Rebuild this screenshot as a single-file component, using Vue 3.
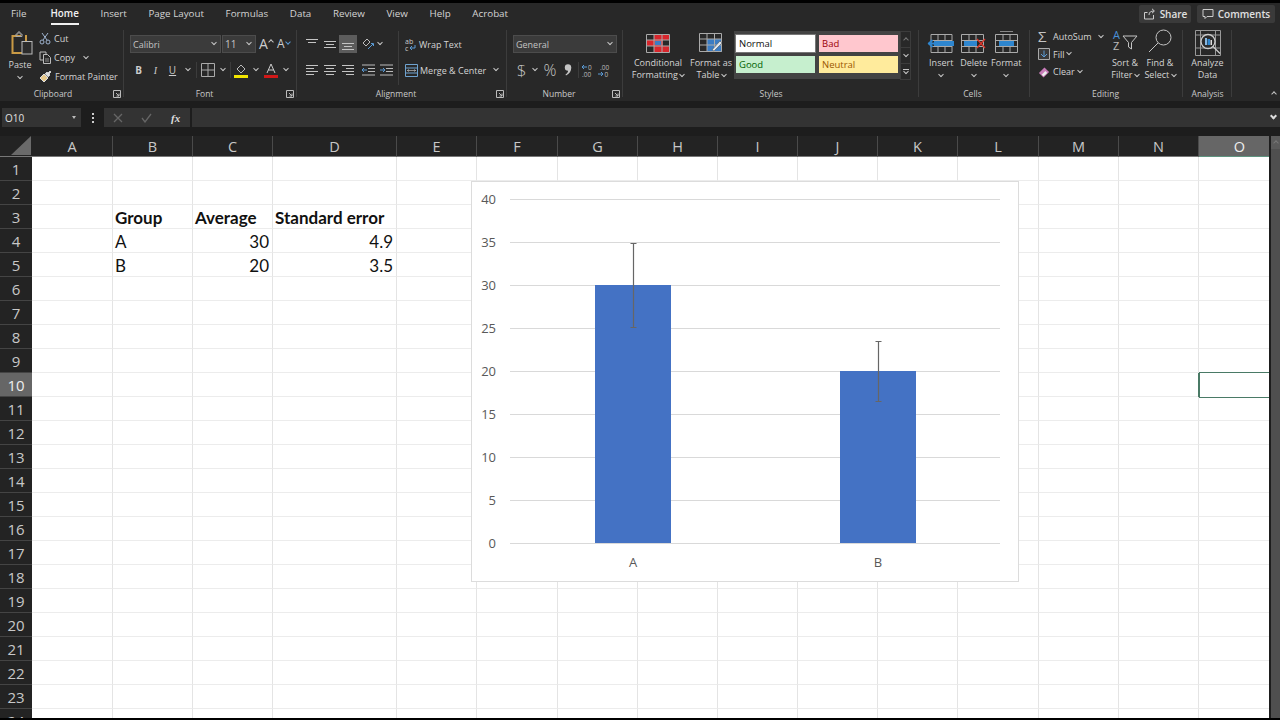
<template>
  <div class="app">
    <!-- tabs -->
    <div class="tabs">
      <span v-for="t in tabs" :key="t" class="tab" :class="{ active: t === 'Home' }">{{ t }}</span>
      <div class="tab-actions">
        <button class="act share">
          <svg width="13" height="12" viewBox="0 0 13 12" fill="none" stroke="#ccc"><path d="M1.5 4.500v6.500h9V7M1.5 4.500h3M6 7c0-3 2-4 5-4M9 .8l2.400 2.200L9 5.200" /></svg>
          Share
        </button>
        <button class="act comments">
          <svg width="12" height="12" viewBox="0 0 12 12" fill="none" stroke="#ccc"><path d="M1 1.500h10v7H5l-2 2v-2H1z" /></svg>
          Comments
        </button>
      </div>
    </div>

    <!-- ribbon -->
    <div class="ribbon">
      <section class="group g-clip">
        <div class="body clip-body">
          <div class="paste">
            <svg width="23" height="24" viewBox="0 0 23 24" fill="none">
              <path d="M10 5H1.500v17H11" stroke="#c99a45" stroke-width="2" />
              <path d="M14 5h1v5" stroke="#c99a45" stroke-width="2" />
              <path d="M5 5V3h2V1h2v2h2v2.500H5z" stroke="#aaa" />
              <rect x="11" y="10.500" width="10" height="12.500" fill="#2b2b2b" stroke="#bbb" />
            </svg>
            <span>Paste</span>
            <i class="chev" />
          </div>
          <div class="small-col">
            <div class="small-row">
              <svg width="12" height="13" viewBox="0 0 12 13" fill="none" stroke="#9fb4d0"><path d="M3 1l5 7M9 1L4 8" /><circle cx="3" cy="10" r="2" /><circle cx="9" cy="10" r="2" /></svg>
              <span>Cut</span>
            </div>
            <div class="small-row">
              <svg width="12" height="13" viewBox="0 0 12 13" fill="none" stroke="#bbb"><path d="M7 3V1H1v8h3" /><path d="M4.500 3.500h4l3 3v6h-7z" /><path d="M6 8h4M6 10h4" stroke-width=".7" /></svg>
              <span>Copy</span>
              <i class="chev spaced" />
            </div>
            <div class="small-row">
              <svg width="13" height="13" viewBox="0 0 13 13" fill="none"><path d="M1 8l4-4 4 4-4 4z" fill="#e6c88a" stroke="#ddd" /><path d="M6 4l2-2 1 1 2-2 1 1-2 2 1 1-2 2" fill="#ddd" stroke="#ccc" /></svg>
              <span>Format Painter</span>
            </div>
          </div>
        </div>
        <div class="label"><span /><span>Clipboard</span><svg class="launcher" width="8" height="8" viewBox="0 0 8 8" fill="none" stroke="#bbb"><path d="M.5 7.500v-7h7v7zM3 3l3 3M6 3.500V6H3.500" /></svg></div>
      </section>

      <section class="group g-font">
        <div class="body rows">
          <div class="row">
            <div class="combo font-name"><span>Calibri</span><i class="chev" /></div>
            <div class="combo font-size"><span>11</span><i class="chev" /></div>
            <span class="grow-font">A<i class="caret up" /></span>
            <span class="grow-font small">A<i class="caret down" /></span>
          </div>
          <div class="row">
            <span class="tb letter bold">B</span>
            <span class="tb letter italic">I</span>
            <span class="tb letter under">U</span>
            <span class="chev-cell wide"><i class="chev" /></span>
            <span class="vsep" />
            <span class="tb w20">
              <svg width="14" height="14" viewBox="0 0 14 14" fill="none" stroke="#aaa"><path d="M.5.500h13v13H.5zM7 .5v13M.5 7h13" /></svg>
            </span>
            <span class="chev-cell"><i class="chev" /></span>
            <span class="vsep narrow" />
            <span class="tb w20">
              <svg width="14" height="15" viewBox="0 0 14 15" fill="none"><path d="M3 6l4-4 4 4-4 4z" stroke="#bbb" /><path d="M0 12h14v3H0z" fill="#f2e500" /></svg>
            </span>
            <span class="chev-cell"><i class="chev" /></span>
            <span class="tb w20">
              <svg width="14" height="15" viewBox="0 0 14 15" fill="none"><path d="M3 10l4-9 4 9M4.500 7h5" stroke="#ccc" /><path d="M0 12h14v3H0z" fill="#d01818" /></svg>
            </span>
            <span class="chev-cell"><i class="chev" /></span>
          </div>
        </div>
        <div class="label"><span /><span>Font</span><svg class="launcher" width="8" height="8" viewBox="0 0 8 8" fill="none" stroke="#bbb"><path d="M.5 7.500v-7h7v7zM3 3l3 3M6 3.500V6H3.500" /></svg></div>
      </section>

      <section class="group g-align">
        <div class="body align-body">
          <div class="rows">
            <div class="row">
              <span v-for="a in alignTop" :key="a.id" class="tb w18" :class="{ pressed: a.on }">
                <svg width="12" height="12" viewBox="0 0 12 12" fill="none" stroke="#c4c4c4"><path :d="a.d" /></svg>
              </span>
              <span class="tb w18 gap-left">
                <svg width="13" height="13" viewBox="0 0 13 13" fill="none"><path d="M1 5l4-4 3 3-4 4z" stroke="#bbb" /><path d="M6 11l5-5M9 5.500h2.500V8" stroke="#5b9bd5" /></svg>
              </span>
              <span class="chev-cell tight"><i class="chev" /></span>
            </div>
            <div class="row">
              <span v-for="a in alignBottom" :key="a.id" class="tb w18">
                <svg width="12" height="12" viewBox="0 0 12 12" fill="none" stroke="#c4c4c4"><path :d="a.d" /></svg>
              </span>
              <span class="tb w18 gap-left">
                <svg width="13" height="12" viewBox="0 0 13 12" fill="none"><path d="M0 1h13M6 4.500h7M6 7.500h7M0 11h13" stroke="#bbb" /><path d="M5 6H0M2 4L0 6l2 2" stroke="#5b9bd5" /></svg>
              </span>
              <span class="tb w18">
                <svg width="13" height="12" viewBox="0 0 13 12" fill="none"><path d="M0 1h13M6 4.500h7M6 7.500h7M0 11h13" stroke="#bbb" /><path d="M0 6h5M3 4l2 2-2 2" stroke="#5b9bd5" /></svg>
              </span>
            </div>
          </div>
          <span class="vsep tall" />
          <div class="rows">
            <div class="row text-btn">
              <svg width="12" height="13" viewBox="0 0 12 13" fill="none">
                <text x="0" y="6" font-size="7" fill="#ccc" font-family="Open Sans, sans-serif">ab</text>
                <text x="0" y="12.500" font-size="7" fill="#ccc" font-family="Open Sans, sans-serif">c</text>
                <path d="M10 7v3H5M7 8L5 10l2 2" stroke="#5b9bd5" />
              </svg>
              <span>Wrap Text</span>
            </div>
            <div class="row text-btn">
              <svg width="13" height="13" viewBox="0 0 13 13" fill="none" stroke="#6fa3d0"><path d="M.5.500h12v12H.5zM.5 4h12M.5 9h12M.5 4v5" /><path d="M2 6.500h9M4 5.500l-1.500 1 1.500 1M9 5.500l1.500 1-1.500 1" stroke="#aaa" stroke-width=".8" /></svg>
              <span>Merge &amp; Center</span>
              <i class="chev spaced" />
            </div>
          </div>
        </div>
        <div class="label"><span /><span>Alignment</span><svg class="launcher" width="8" height="8" viewBox="0 0 8 8" fill="none" stroke="#bbb"><path d="M.5 7.500v-7h7v7zM3 3l3 3M6 3.500V6H3.500" /></svg></div>
      </section>

      <section class="group g-number">
        <div class="body rows">
          <div class="row">
            <div class="combo number-format"><span>General</span><i class="chev" /></div>
          </div>
          <div class="row">
            <span class="tb glyph dollar">$</span>
            <span class="chev-cell"><i class="chev" /></span>
            <span class="tb glyph percent">%</span>
            <span class="tb comma">
              <svg width="8" height="12" viewBox="0 0 8 12"><circle cx="4" cy="3.500" r="3.200" fill="#c4c4c4" /><path d="M7.200 3.500C7.400 7 5.500 10 2 11.500L1.500 10.500C3.500 9 4.500 7.500 4 6z" fill="#c4c4c4" /></svg>
            </span>
            <span class="vsep narrow" />
            <span class="tb decimals">
              <svg width="13" height="13" viewBox="0 0 13 13" fill="none"><path d="M6 3H1M3 1L1 3l2 2" stroke="#5b9bd5" /><text x="7" y="6" font-size="6.500" fill="#bbb" font-family="Open Sans, sans-serif">0</text><text x="1" y="12.500" font-size="6.500" fill="#bbb" font-family="Open Sans, sans-serif">.00</text></svg>
            </span>
            <span class="tb decimals">
              <svg width="13" height="13" viewBox="0 0 13 13" fill="none"><path d="M1 10h5M4 8l2 2-2 2" stroke="#5b9bd5" /><text x="3" y="6" font-size="6.500" fill="#bbb" font-family="Open Sans, sans-serif">.00</text><text x="7.500" y="12.500" font-size="6.500" fill="#bbb" font-family="Open Sans, sans-serif">0</text></svg>
            </span>
          </div>
        </div>
        <div class="label"><span /><span>Number</span><svg class="launcher" width="8" height="8" viewBox="0 0 8 8" fill="none" stroke="#bbb"><path d="M.5 7.500v-7h7v7zM3 3l3 3M6 3.500V6H3.500" /></svg></div>
      </section>

      <section class="group g-styles">
        <div class="body styles-body">
          <div class="large cf">
            <div class="large-icon">
              <svg width="24" height="19" viewBox="0 0 24 19" fill="none">
                <path d="M8 1h15v5H8zM1 6h16v6H1zM8 12h15v6H8z" fill="#d8262c" />
                <path d="M9 7h6v4H9z" fill="#3a7cc4" />
                <path d="M.5.500h23v18H.5zM.5 6h23M.5 12h23M8 .5v18M16 .5v18" stroke="#aaa" />
              </svg>
            </div>
            <span>Conditional</span>
            <span>Formatting <i class="chev" /></span>
          </div>
          <div class="large ft">
            <div class="large-icon">
              <svg width="24" height="20" viewBox="0 0 24 20" fill="none">
                <path d="M8 6h15v13H8z" fill="#3a7cc4" />
                <path d="M.5.500h22v18H.5zM.5 6h22M.5 12h22M8 .5v18M15.500.5v18" stroke="#aaa" />
                <path d="M13 17l8-9 2 2-8 8z" fill="#dfe6ee" stroke="#444" stroke-width=".5" />
              </svg>
            </div>
            <span>Format as</span>
            <span>Table <i class="chev" /></span>
          </div>
          <div class="gallery">
            <div class="swatches">
              <span v-for="s in swatches" :key="s.name" class="swatch" :class="s.cls">{{ s.name }}</span>
            </div>
            <div class="scrollers">
              <span><i class="caret up dim" /></span>
              <span><i class="chev" /></span>
              <span class="more"><i class="chev" /></span>
            </div>
          </div>
        </div>
        <div class="label plain">Styles</div>
      </section>

      <section class="group g-cells">
        <div class="body cells-body">
          <div class="large cell-btn">
            <div class="large-icon">
              <svg width="26" height="19" viewBox="0 0 26 19" fill="none">
                <path d="M3 .5h21v18H3zM3 6.500h21M3 12.500h21M10 .5v18M17 .5v18" stroke="#aaa" />
                <path d="M6 7h20v5H6z" fill="#2e86cf" />
                <path d="M0 9.500h8M4.500 6L1 9.500 4.500 13" stroke="#2e86cf" stroke-width="2" />
              </svg>
            </div>
            <span>Insert</span>
            <i class="chev" />
          </div>
          <div class="large cell-btn">
            <div class="large-icon">
              <svg width="25" height="19" viewBox="0 0 25 19" fill="none">
                <path d="M.5.500h22v18H.5zM.5 6.500h22M.5 12.500h22M8 .5v18M15 .5v18" stroke="#aaa" />
                <path d="M3 7h13v5H3z" fill="#2e86cf" />
                <path d="M16 5l8 9M24 5l-8 9" stroke="#d8352a" stroke-width="1.400" />
              </svg>
            </div>
            <span>Delete</span>
            <i class="chev" />
          </div>
          <div class="large cell-btn">
            <div class="large-icon">
              <svg width="23" height="22" viewBox="0 0 23 22" fill="none">
                <path d="M5 .5h13" stroke="#888" />
                <path d="M.5 3.500h22v18H.5zM.5 9.500h22M.5 15.500h22M8 3.500v18M15 3.500v18" stroke="#aaa" />
                <path d="M4 10h15v5H4z" fill="#2e86cf" />
              </svg>
            </div>
            <span>Format</span>
            <i class="chev" />
          </div>
        </div>
        <div class="label plain">Cells</div>
      </section>

      <section class="group g-edit">
        <div class="body edit-body">
          <div class="small-col edit-col">
            <div class="small-row">
              <span class="sigma">Σ</span>
              <span>AutoSum</span>
              <i class="chev far" />
            </div>
            <div class="small-row">
              <svg width="12" height="12" viewBox="0 0 12 12" fill="none"><path d="M.5.500h11v11H.5z" stroke="#aaa" fill="#3a3a3a" /><path d="M6 2.500v6.500M3 6l3 3 3-3" stroke="#5b9bd5" /></svg>
              <span>Fill</span>
              <i class="chev" />
            </div>
            <div class="small-row">
              <svg width="12" height="12" viewBox="0 0 13 13"><path d="M1 7.500L7 1.500l5 5-6 6z" fill="#c77bb8" /><path d="M4 9.500l4-4 2 2-4 3.500z" fill="#eee" /></svg>
              <span>Clear</span>
              <i class="chev" />
            </div>
          </div>
          <div class="large sort">
            <div class="large-icon">
              <svg width="26" height="24" viewBox="0 0 26 24" fill="none">
                <text x="1" y="10" font-size="11" fill="#4a90d9" font-family="Open Sans, sans-serif">A</text>
                <text x="1" y="21" font-size="11" fill="#bbb" font-family="Open Sans, sans-serif">Z</text>
                <path d="M11 7h14l-5.500 6.500V20L16.500 18v-4.500z" stroke="#c4c4c4" />
              </svg>
            </div>
            <span>Sort &amp;</span>
            <span>Filter <i class="chev" /></span>
          </div>
          <div class="large find">
            <div class="large-icon">
              <svg width="24" height="24" viewBox="0 0 24 24" fill="none" stroke="#c4c4c4"><circle cx="15.500" cy="8.500" r="7.500" /><path d="M10 14L1 23" /></svg>
            </div>
            <span>Find &amp;</span>
            <span>Select <i class="chev" /></span>
          </div>
        </div>
        <div class="label plain">Editing</div>
      </section>

      <section class="group g-analysis">
        <div class="body">
          <div class="large analyze">
            <div class="large-icon">
              <svg width="26" height="26" viewBox="0 0 26 26" fill="none">
                <path d="M.5.500h25v25H.5zM.5 5h25M.5 18h25M5.500.5v25M20.500.5v25" stroke="#999" />
                <circle cx="13" cy="11.500" r="7" fill="#2b2b2b" stroke="#ccc" stroke-width="1.300" />
                <path d="M10 8h2v7h-2z" fill="#8ab8e0" /><path d="M12.500 9h2.500v6h-2.500z" fill="#2e86cf" /><path d="M15.500 10H17v5h-1.500z" fill="#ddd" />
                <path d="M18 16.500l7 7" stroke="#ccc" stroke-width="1.300" />
              </svg>
            </div>
            <span>Analyze</span>
            <span>Data</span>
          </div>
        </div>
        <div class="label plain">Analysis</div>
      </section>

      <div class="collapse"><i class="caret up" /></div>
    </div>

    <!-- formula bar -->
    <div class="formula">
      <div class="name-box"><span>O10</span><i class="tri" /></div>
      <div class="dots"><i /><i /><i /></div>
      <div class="fn-box">
        <svg width="10" height="10" viewBox="0 0 10 10" fill="none" stroke="#666" stroke-width="1.300"><path d="M1 1l8 8M9 1L1 9" /></svg>
        <svg width="11" height="10" viewBox="0 0 11 10" fill="none" stroke="#666" stroke-width="1.300"><path d="M1 5l3 4 6-8" /></svg>
        <span class="fx">fx</span>
      </div>
      <div class="fn-input"><i class="chev bold-chev" /></div>
    </div>

    <!-- sheet -->
    <div class="sheet">
      <div class="grid" :style="{ gridTemplateColumns: gridCols }">
        <div class="corner"><svg width="20" height="19" viewBox="0 0 20 19"><path d="M0 19L20 0v19z" fill="#6a6a6a" /></svg></div>
        <div v-for="c in columns" :key="c.name" class="col-head" :class="{ selected: c.name === 'O' }">{{ c.name }}</div>
        <template v-for="r in rows" :key="r">
          <div class="row-head" :class="{ selected: r === 10 }">{{ r }}</div>
          <div
            v-for="c in columns"
            :key="c.name + r"
            class="cell"
            :class="cellClass(c.name, r)"
          >{{ cellText(c.name, r) }}</div>
        </template>

        <div class="chart">
          <svg width="546" height="399" viewBox="0 0 546 399">
            <g v-for="t in ticks" :key="t.v">
              <line x1="38" x2="528" :y1="t.y" :y2="t.y" stroke="#d9d9d9" />
              <text x="24" :y="t.y + 4.500" text-anchor="end" class="axis">{{ t.v }}</text>
            </g>
            <g v-for="b in bars" :key="b.name">
              <rect :x="b.x - 38" :y="b.top" width="76" :height="b.h" fill="#4472c4" />
              <path :d="b.err" stroke="#666" stroke-width="1.200" fill="none" />
              <text :x="b.x" y="384.500" text-anchor="middle" class="axis">{{ b.name }}</text>
            </g>
          </svg>
        </div>
      </div>
      <div class="scrollbar"><span class="sb-up"><i class="caret up dim" /></span></div>
    </div>
  </div>
</template>

<script setup>
const tabs = ['File', 'Home', 'Insert', 'Page Layout', 'Formulas', 'Data', 'Review', 'View', 'Help', 'Acrobat']

const alignTop = [
  { id: 'top', d: 'M0 1.500h12M2 4.500h8' },
  { id: 'mid', d: 'M0 3.500h12M2 6.500h8M0 9.500h12' },
  { id: 'bot', d: 'M0 5.500h12M2 8.500h8M0 11.500h12', on: true },
]
const alignBottom = [
  { id: 'left', d: 'M0 1.500h12M0 4.500h8M0 7.500h12M0 10.500h8' },
  { id: 'center', d: 'M0 1.500h12M2 4.500h8M0 7.500h12M2 10.500h8' },
  { id: 'right', d: 'M0 1.500h12M4 4.500h8M0 7.500h12M4 10.500h8' },
]

const swatches = [
  { name: 'Normal', cls: 'normal' },
  { name: 'Bad', cls: 'bad' },
  { name: 'Good', cls: 'good' },
  { name: 'Neutral', cls: 'neutral' },
]

const columns = [
  ['A', 81], ['B', 80], ['C', 80], ['D', 124], ['E', 80], ['F', 81], ['G', 80], ['H', 80],
  ['I', 80], ['J', 80], ['K', 80], ['L', 81], ['M', 80], ['N', 80], ['O', 81],
].map(([name, w]) => ({ name, w }))
const gridCols = '32px ' + columns.map(c => c.w + 'px').join(' ')
const rows = Array.from({ length: 24 }, (_, i) => i + 1)

const cells = {
  B3: { text: 'Group', bold: true },
  C3: { text: 'Average', bold: true },
  D3: { text: 'Standard error', bold: true },
  B4: { text: 'A' },
  C4: { text: '30', num: true },
  D4: { text: '4.9', num: true },
  B5: { text: 'B' },
  C5: { text: '20', num: true },
  D5: { text: '3.5', num: true },
}

function cellText(col, row) {
  return cells[col + row]?.text ?? ''
}

function cellClass(col, row) {
  const c = cells[col + row]
  return {
    bold: c?.bold,
    num: c?.num,
    active: col + row === 'O10',
  }
}

// chart: 0 sits at y=361, 8.6px per unit
const y0 = 361
const yOf = v => y0 - v * 8.6
const ticks = [0, 5, 10, 15, 20, 25, 30, 35, 40].map(v => ({ v, y: Math.round(yOf(v)) + 0.5 }))
const bars = [
  { name: 'A', x: 161, value: 30, se: 4.9 },
  { name: 'B', x: 406, value: 20, se: 3.5 },
].map(b => {
  const top = Math.round(yOf(b.value))
  const hi = Math.round(yOf(b.value + b.se)) + 0.5
  const lo = Math.round(yOf(b.value - b.se)) + 0.5
  const x = b.x + 0.5
  return {
    ...b,
    top,
    h: y0 - top,
    err: `M${x} ${hi}V${lo}M${x - 3} ${hi}h6M${x - 3} ${lo}h6`,
  }
})
</script>

<style>
html, body { margin: 0; background: #000; }
</style>

<style scoped>
.app {
  width: 1280px;
  height: 720px;
  overflow: hidden;
  background: #000;
  display: flex;
  flex-direction: column;
  padding-top: 3px;
  box-sizing: border-box;
  font-family: "Open Sans", "Liberation Sans", sans-serif;
  color: #d4d4d4;
  font-size: 9px;
}

/* tabs */
.tabs {
  height: 25px;
  background: #282828;
  display: flex;
  align-items: center;
  gap: 21.600px;
  padding: 0 5px 3px 11px;
  box-sizing: border-box;
  flex: none;
}
.tab {
  font-size: 9.800px;
  line-height: 14px;
  position: relative;
}
.tab:first-child {
  margin-right: 2.400px;
}
.tab.active {
  font-weight: 600;
  color: #f2f2f2;
}
.tab.active::after {
  content: "";
  position: absolute;
  left: 0;
  right: 0;
  bottom: -4px;
  height: 2px;
  background: #f0f0f0;
}
.tab-actions {
  margin-left: auto;
  display: flex;
  gap: 6px;
}
.act {
  height: 18px;
  background: #3a3a3a;
  border: 0;
  border-radius: 2px;
  color: #e0e0e0;
  font: 600 10px "Open Sans", sans-serif;
  display: flex;
  align-items: center;
  justify-content: center;
  gap: 4px;
  padding: 0;
}
.share { width: 52px; }
.comments { width: 78px; }

/* ribbon */
.ribbon {
  height: 73px;
  flex: none;
  background: #282828;
  display: flex;
}
.group {
  flex: none;
  box-sizing: border-box;
  display: flex;
  flex-direction: column;
  position: relative;
}
.group::after {
  content: "";
  position: absolute;
  right: 0;
  top: 2px;
  bottom: 4px;
  width: 1px;
  background: #3c3c3c;
}
.g-clip { width: 124px; }
.g-font { width: 173px; padding-left: 6px; }
.g-align { width: 210px; padding-left: 6px; }
.g-number { width: 116px; padding-left: 6px; }
.g-styles { width: 296px; padding-left: 10px; }
.g-cells { width: 111px; padding-left: 6px; }
.g-edit { width: 153px; padding-left: 8px; }
.g-analysis { width: 49px; }

.body {
  height: 59px;
  flex: none;
  box-sizing: border-box;
}
.label {
  height: 14px;
  font-size: 8.500px;
  line-height: 14px;
  color: #c8c8c8;
  display: grid;
  grid-template-columns: 1fr auto 1fr;
  align-items: center;
  text-align: center;
  padding-right: 18px;
}
.label.plain {
  display: block;
  padding-right: 10px;
}
.g-analysis .label.plain {
  padding-right: 0;
}
.launcher {
  justify-self: end;
  margin-right: -15px;
}

.rows {
  display: flex;
  flex-direction: column;
  gap: 8px;
  padding-top: 7px;
}
.row {
  height: 18px;
  display: flex;
  align-items: center;
}

/* small pieces */
.chev {
  display: inline-block;
  width: 3px;
  height: 3px;
  border-right: 1px solid #c4c4c4;
  border-bottom: 1px solid #c4c4c4;
  transform: translateY(-1.500px) rotate(45deg);
  flex: none;
}
.chev.spaced { margin-left: 6px; }
.chev.far { margin-left: 4px; }
.bold-chev {
  border-width: 2px;
  border-color: #ddd;
}
.caret {
  display: inline-block;
  width: 3px;
  height: 3px;
  border-left: 1px solid #c4c4c4;
  border-top: 1px solid #c4c4c4;
  transform: rotate(45deg);
}
.caret.down {
  transform: rotate(225deg);
  border-color: #5b9bd5;
}
.caret.up.dim { border-color: #777; }
.chev-cell {
  width: 10px;
  height: 18px;
  display: flex;
  align-items: center;
  justify-content: center;
}
.chev-cell.wide { width: 14px; }
.chev-cell.tight { width: 8px; margin-left: -1px; }
.tb {
  width: 17px;
  height: 18px;
  display: flex;
  align-items: center;
  justify-content: center;
  flex: none;
}
.tb.w18 { width: 18px; }
.tb.w20 { width: 20px; }
.tb.gap-left { margin-left: 2px; }
.tb.pressed { background: #5c5c5c; }
.vsep {
  width: 1px;
  height: 16px;
  background: #3c3c3c;
  margin: 0 1px;
  flex: none;
}
.vsep.narrow { margin: 0 0 0 2px; }
.vsep.tall {
  height: 54px;
  margin: 3px 6px 0 3px;
}

/* clipboard */
.clip-body {
  display: flex;
  padding-left: 4px;
}
.paste {
  width: 32px;
  display: flex;
  flex-direction: column;
  align-items: center;
  padding-top: 3px;
}
.paste svg { margin: 0 0 3px 4px; }
.paste span { line-height: 13px; }
.paste .chev { margin-top: 5px; }
.small-col {
  display: flex;
  flex-direction: column;
  padding-top: 1px;
  margin-left: 3px;
}
.small-row {
  height: 19px;
  display: flex;
  align-items: center;
  gap: 3px;
  white-space: nowrap;
}

/* font */
.combo {
  height: 18px;
  box-sizing: border-box;
  background: #3b3b3b;
  border: 1px solid #4c4c4c;
  display: flex;
  align-items: center;
  justify-content: space-between;
  padding: 0 4px 0 2px;
  font-size: 9px;
  color: #c4c4c4;
}
.font-name { width: 91px; }
.font-size { width: 34px; margin-left: 1px; font-size: 10px; }
.number-format { width: 104px; }
.grow-font {
  font-size: 14px;
  margin-left: 3px;
  width: 17px;
  display: flex;
  align-items: flex-start;
  gap: 1px;
  line-height: 18px;
  color: #ccc;
}
.grow-font.small { font-size: 12px; margin-left: 1px; }
.grow-font .caret { margin-top: 5px; }
.letter {
  font-size: 10px;
  color: #ccc;
  font-family: "Liberation Serif", serif;
}
.letter.bold { font-family: "Open Sans", sans-serif; font-weight: 700; }
.letter.italic { font-style: italic; }
.letter.under { font-family: "Open Sans", sans-serif; text-decoration: underline; }

/* alignment */
.align-body { display: flex; }
.text-btn {
  gap: 2px;
  white-space: nowrap;
}

/* number */
.glyph { color: #c4c4c4; font-weight: 300; }
.dollar { font-size: 17px; }
.percent { font-size: 16px; width: 20px; }
.comma { width: 16px; margin-left: 0; }
.decimals { width: 16px; }

/* styles */
.large {
  display: flex;
  flex-direction: column;
  align-items: center;
  flex: none;
  line-height: 12px;
  white-space: nowrap;
}
.large-icon {
  height: 29px;
  display: flex;
  align-items: flex-end;
  padding-bottom: 4px;
  box-sizing: border-box;
}
.large-icon svg { overflow: visible; }
.large > .chev { margin-top: 5px; }
.styles-body { display: flex; }
.cf { width: 50px; }
.ft { width: 42px; margin-left: 7px; }
.gallery {
  margin: 3px 0 0 2px;
  display: flex;
  height: 48px;
}
.swatches {
  width: 166px;
  background: #434343;
  box-sizing: border-box;
  padding: 4px 2px;
  display: grid;
  grid-template-columns: 79px 79px;
  grid-auto-rows: 17px;
  column-gap: 4px;
  row-gap: 4px;
}
.swatch {
  font-size: 9.500px;
  line-height: 17px;
  padding-left: 3px;
}
.normal { background: #fff; color: #111; outline: 1px solid #777; }
.bad { background: #ffc7ce; color: #9c0006; }
.good { background: #c6efce; color: #006100; }
.neutral { background: #ffeb9c; color: #9c5700; }
.scrollers {
  width: 11px;
  display: flex;
  flex-direction: column;
}
.scrollers span {
  flex: 1;
  border: 1px solid #3c3c3c;
  margin-bottom: -1px;
  display: flex;
  align-items: center;
  justify-content: center;
}
.scrollers .more {
  flex-direction: column;
  gap: 1px;
}
.more::before {
  content: "";
  width: 6px;
  height: 1px;
  background: #c4c4c4;
}

/* cells, editing */
.cells-body { display: flex; }
.cell-btn { width: 32.500px; }
.edit-body { display: flex; }
.edit-col {
  width: 69.500px;
  margin-left: 0;
  flex: none;
  padding-top: 0;
}
.edit-col .small-row { height: 17.500px; }
.sigma {
  font-size: 15px;
  line-height: 15px;
  width: 12px;
  color: #c4c4c4;
}
.sort { width: 35px; }
.find { width: 35px; }
.analyze { width: 49px; }
.g-analysis .large-icon { height: 29px; padding-bottom: 1px; }

.collapse {
  flex: 1;
  display: flex;
  justify-content: flex-end;
  align-items: flex-end;
  padding: 0 4px 5px 0;
}

/* formula bar */
.formula {
  margin-top: 7px;
  height: 19px;
  flex: none;
  display: flex;
  background: #1d1d1d;
  box-shadow: 0 -7px 0 #1d1d1d, 0 9px 0 #1d1d1d;
}
.name-box {
  margin-left: 2px;
  width: 79px;
  background: #333;
  display: flex;
  align-items: center;
  justify-content: space-between;
  padding: 0 5px 0 3px;
  box-sizing: border-box;
  font-size: 10px;
  color: #e0e0e0;
}
.tri {
  width: 0;
  height: 0;
  border: 2.500px solid transparent;
  border-top: 3px solid #bbb;
  border-bottom: 0;
}
.dots {
  width: 23px;
  display: flex;
  flex-direction: column;
  align-items: center;
  justify-content: center;
  gap: 2px;
}
.dots i {
  width: 2px;
  height: 2px;
  background: #ccc;
}
.fn-box {
  width: 86px;
  background: #333;
  display: flex;
  align-items: center;
  gap: 18px;
  padding-left: 9px;
  box-sizing: border-box;
}
.fx {
  font: italic 700 11px "Liberation Serif", serif;
  color: #ddd;
  margin-left: 1px;
}
.fn-input {
  flex: 1;
  margin-left: 2px;
  background: #333;
  display: flex;
  align-items: center;
  justify-content: flex-end;
  padding-right: 4px;
}

/* sheet */
.sheet {
  margin-top: 9px;
  display: flex;
  height: 582px;
  flex: none;
  background: #1d1d1d;
  position: relative;
}
.grid {
  position: relative;
  display: grid;
  grid-auto-rows: 24px;
  grid-template-rows: 21px;
  width: 1269px;
  overflow: hidden;
  flex: none;
  align-content: start;
}
.corner {
  background: #232323;
  display: flex;
  align-items: flex-end;
  justify-content: flex-end;
  padding: 0 1px 1px 0;
  box-sizing: border-box;
  border-bottom: 1px solid #777;
}
.col-head {
  background: #232323;
  color: #c8c8c8;
  font-size: 14.500px;
  line-height: 22px;
  text-align: center;
  box-sizing: border-box;
  border-right: 1px solid #4a4a4a;
  border-bottom: 1px solid #777;
}
.col-head.selected {
  background: #666;
  color: #eee;
  border-right: 0;
  border-bottom: 1px solid #5f9480;
}
.row-head {
  background: #232323;
  color: #c8c8c8;
  font-size: 15px;
  line-height: 25px;
  text-align: center;
  box-sizing: border-box;
  border-bottom: 1px solid #444;
}
.row-head.selected {
  background: #666;
  color: #eee;
}
.cell {
  background: #fff;
  box-sizing: border-box;
  border-right: 1px solid #e4e4e4;
  border-bottom: 1px solid #ececec;
  color: #111;
  font: 17px/26px Lato, "Open Sans", sans-serif;
  padding: 0 3px 0 2px;
  white-space: nowrap;
}
.cell.bold { font-weight: 700; }
.cell.num { text-align: right; }
.cell.active {
  position: relative;
  z-index: 1;
  border: 0;
  box-shadow: inset 1px 0 0 #4a7a66, -1px 0 0 #4a7a66, 0 -1px 0 #4a7a66, 0 1px 0 #4a7a66;
}
.chart {
  position: absolute;
  z-index: 2;
  left: 471px;
  top: 45px;
  width: 546px;
  height: 399px;
  background: #fff;
  border: 1px solid #dcdcdc;
}
.chart svg { display: block; }
.axis {
  font: 13px "Open Sans", sans-serif;
  fill: #595959;
}
.scrollbar {
  flex: 1;
  background: #4f4f4f;
  margin-left: 2px;
}
.sb-up {
  display: flex;
  height: 13px;
  align-items: center;
  justify-content: center;
  background: #5a5a5a;
}
</style>
